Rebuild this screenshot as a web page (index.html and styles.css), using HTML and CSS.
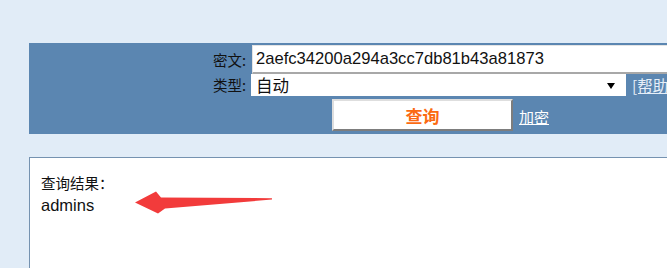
FILE: index.html
```html
<!DOCTYPE html>
<html lang="zh-CN">
<head>
<meta charset="utf-8">
<title>查询</title>
<link rel="stylesheet" href="styles.css">
</head>
<body>
<div class="page">
  <form class="panel">
    <div class="row">
      <label class="label" for="mw">密文:</label>
      <div class="field"><input id="mw" class="text-input" type="text" value="2aefc34200a294a3cc7db81b43a81873"></div>
    </div>
    <div class="row">
      <label class="label" for="lx">类型:</label>
      <div class="field">
        <span class="select-wrap">
          <select id="lx" class="type-select"><option>自动</option></select>
          <svg class="select-arrow" width="8" height="6" viewBox="0 0 8 6"><polygon points="0,0 8,0 4,6" fill="#000"/></svg>
        </span>
        <a class="help-link" href="#">[帮助]</a>
      </div>
    </div>
    <div class="row">
      <span class="label"></span>
      <div class="field actions">
        <button type="button" class="query-btn">查询</button>
        <a class="enc-link" href="#">加密</a>
      </div>
    </div>
  </form>
  <div class="result">
    <div class="result-title">查询结果：</div>
    <div class="result-value">admins</div>
  </div>
</div>
<svg class="arrow" width="667" height="268" viewBox="0 0 667 268">
  <polygon points="135,202.5 156,191.5 161,197.5 272,198.2 272,199.6 165,208.5 158,213.5" fill="#f23b3b"/>
</svg>
</body>
</html>
```
FILE: styles.css
```css
html, body {
  margin: 0;
  padding: 0;
}
body {
  background: #e1ecf7;
  width: 667px;
  height: 268px;
  overflow: hidden;
  position: relative;
  font-family: "Liberation Sans", "Noto Sans CJK SC", sans-serif;
  color: #111;
}
.page {
  padding-top: 43px;
  padding-left: 29px;
}
.panel {
  width: 700px;
  background: #5b86b1;
  padding: 2px 0 3px 0;
  margin: 0;
}
.row {
  display: grid;
  grid-template-columns: 223px 1fr;
  align-items: center;
}
.label {
  text-align: right;
  padding-right: 6px;
  font-family: "Noto Sans CJK SC", sans-serif;
  font-size: 14.5px;
  color: #111;
  line-height: 18px;
}
.field {
  display: flex;
  align-items: center;
}
.text-input {
  box-sizing: border-box;
  width: 430px;
  height: 29px;
  margin: 0;
  padding: 0 0 0 3px;
  border: 1px solid #e4e4e4;
  border-bottom: 2px solid #a8a8a8;
  background: #fff;
  font-family: "Liberation Sans", sans-serif;
  font-size: 16.6px;
  color: #111;
  outline: none;
}
.select-wrap {
  position: relative;
  display: block;
  width: 375px;
  height: 22px;
  margin-left: -1px;
}
.type-select {
  -webkit-appearance: none;
  appearance: none;
  box-sizing: border-box;
  width: 375px;
  height: 22px;
  margin: 0;
  padding: 0 0 0 5px;
  border: none;
  border-radius: 0;
  background: #fff;
  font-family: "Noto Sans CJK SC", sans-serif;
  font-size: 16.5px;
  line-height: 22px;
  color: #111;
  outline: none;
}
.select-arrow {
  position: absolute;
  right: 11px;
  top: 9px;
}
.help-link {
  margin-left: 6px;
  font-family: "Noto Sans CJK SC", sans-serif;
  font-size: 15.5px;
  color: #e6eef8;
  text-decoration: underline;
  white-space: nowrap;
}
.actions {
  padding-top: 3px;
  padding-left: 80px;
}
.query-btn {
  box-sizing: border-box;
  width: 181px;
  height: 32px;
  margin: 0;
  padding: 0;
  background: #fff;
  border: 2px solid;
  border-color: #dedede #7d7d7d #7d7d7d #dedede;
  font-family: "Noto Sans CJK SC", sans-serif;
  font-size: 17px;
  font-weight: bold;
  color: #fb6a12;
  cursor: pointer;
}
.enc-link {
  margin-left: 6px;
  margin-top: 2px;
  font-family: "Noto Sans CJK SC", sans-serif;
  font-size: 15px;
  color: #fff;
  text-decoration: underline;
}
.result {
  margin-top: 23px;
  width: 700px;
  height: 200px;
  box-sizing: border-box;
  background: #fff;
  border: 1px solid #7592b0;
  padding: 14px 0 0 11px;
}
.result-title {
  font-family: "Noto Sans CJK SC", sans-serif;
  font-size: 14.5px;
  line-height: 22px;
  color: #111;
}
.result-value {
  font-family: "Liberation Sans", sans-serif;
  font-size: 16.5px;
  line-height: 22px;
  color: #111;
}
.arrow {
  position: absolute;
  left: 0;
  top: 0;
  pointer-events: none;
}
```
